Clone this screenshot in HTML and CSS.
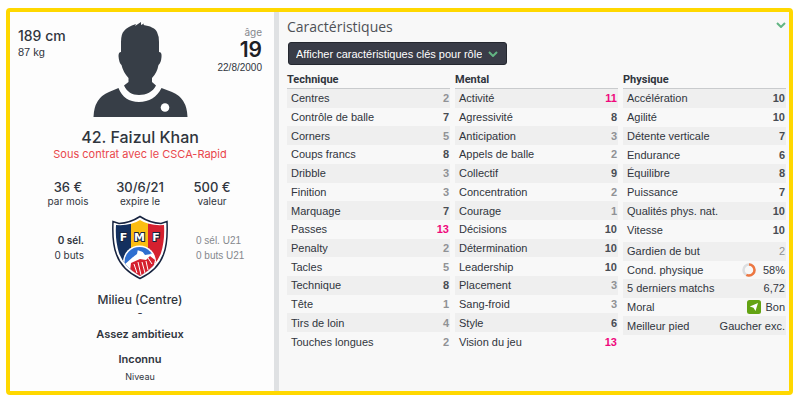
FILE: index.html
```html
<!DOCTYPE html>
<html lang="fr">
<head>
<meta charset="utf-8">
<meta name="viewport" content="width=device-width, initial-scale=1">
<title>Faizul Khan</title>
<link rel="stylesheet" href="styles.css">
</head>
<body>
<main class="frame">
  <aside class="profile">
    <header class="identity">
      <div class="build">
        <div class="height">189 cm</div>
        <div class="weight">87 kg</div>
      </div>
      <svg class="portrait" viewBox="0 0 95 95" aria-hidden="true">
        <path d="M48 0L48 3L51 1.500L50.500 3C57 4 62 6 64 10Q66 14 66 20V30Q69 30 68.500 35Q68 41 65.500 43Q64 51 59 56V60L63 63.500C60 70 53 73 46 73C39 73 34 70 31 63.500L35.500 60V56Q30 50 28.500 43Q26 41 25.500 34Q25.500 30 28 30L28 20Q28 12 31 9Q34 5 43 2L42 4Z"/>
        <path d="M25.500 66C29 75 36 80 46 80C56 80 64 75 68.500 66L79 70Q94 76 94.500 95H0.500Q1 76 16 70Z"/>
        <circle class="pin" cx="72" cy="85.500" r="4.300"/>
      </svg>
      <div class="age">
        <div class="age-label">âge</div>
        <div class="age-value">19</div>
        <div class="birth">22/8/2000</div>
      </div>
    </header>
    <h1 class="name">42. Faizul Khan</h1>
    <p class="club">Sous contrat avec le CSCA-Rapid</p>
    <dl class="contract">
      <div><dd>36 €</dd><dt>par mois</dt></div>
      <div><dd>30/6/21</dd><dt>expire le</dt></div>
      <div><dd>500 €</dd><dt>valeur</dt></div>
    </dl>
    <section class="nation">
      <div class="caps">0 sél.<br><span>0 buts</span></div>
      <svg class="crest" viewBox="0 0 58 65" role="img" aria-label="FMF">
        <defs><clipPath id="field"><path d="M29 5Q20 11 5 10Q4 25 8 38Q13 52 29 61Q45 52 50 38Q54 25 53 10Q38 11 29 5Z"/></clipPath></defs>
        <path d="M29 1.500Q19 8 8 8.500L2 6.500Q1 28 5.500 39.500Q11 55 29 63.500Q47 55 52.500 39.500Q57 28 56 6.500L50 8.500Q39 8 29 1.500Z" fill="#fff" stroke="#17233f" stroke-width="1.500"/>
        <g clip-path="url(#field)">
          <path fill="#14305f" d="M0 0H20V65H0Z"/>
          <path fill="#fbbd12" d="M20 0H37V65H20Z"/>
          <path fill="#d5202f" d="M37 0H58V65H37Z"/>
          <circle cx="28.500" cy="47" r="16.500" fill="#fff"/>
          <circle cx="28.500" cy="47" r="15" fill="#2f6fd0"/>
          <path fill="#fff" d="M13 50L22 42L26 35L32 37L43 39L44 49L34 62L20 60Z"/>
          <path fill="#2f6fd0" d="M22 36L27 34L26 39L22 42ZM31 36L36 35L40 39L34 40Z"/>
          <path fill="#d5202f" d="M20 48L29 44L35 45L39 41L44 45L42 54L29 63L19 56Z"/>
          <path d="M23 49L26 58M27 47L30 60M31 47L34 58M35 46L37 55M37 43L41 49" fill="none" stroke="#fff" stroke-width="1"/>
        </g>
        <g class="crest-text"><text x="12.500" y="26">F</text><text x="28.500" y="26">M</text><text x="45" y="26">F</text></g>
      </svg>
      <div class="caps junior">0 sél. U21<br>0 buts U21</div>
    </section>
    <p class="position">Milieu (Centre)</p>
    <p class="dash">-</p>
    <p class="trait">Assez ambitieux</p>
    <p class="trait standing">Inconnu</p>
    <p class="level">Niveau</p>
  </aside>

  <section class="attributes">
    <header class="heading">
      <h2>Caractéristiques</h2>
      <button class="collapse" type="button" aria-label="Réduire"><svg viewBox="0 0 10 6" aria-hidden="true"><path d="M1 1L5 5L9 1"/></svg></button>
    </header>
    <div class="picker">
      <select aria-label="Rôle"><option>Afficher caractéristiques clés pour rôle</option></select>
      <svg viewBox="0 0 10 6" aria-hidden="true"><path d="M1 1L5 5L9 1"/></svg>
    </div>
    <div class="columns">
      <div class="column">
        <h3>Technique</h3>
        <table class="full">
          <tr><th scope="row">Centres</th><td class="low">2</td></tr>
          <tr><th scope="row">Contrôle de balle</th><td>7</td></tr>
          <tr><th scope="row">Corners</th><td class="low">5</td></tr>
          <tr><th scope="row">Coups francs</th><td>8</td></tr>
          <tr><th scope="row">Dribble</th><td class="low">3</td></tr>
          <tr><th scope="row">Finition</th><td class="low">3</td></tr>
          <tr><th scope="row">Marquage</th><td>7</td></tr>
          <tr><th scope="row">Passes</th><td class="top">13</td></tr>
          <tr><th scope="row">Penalty</th><td class="low">2</td></tr>
          <tr><th scope="row">Tacles</th><td class="low">5</td></tr>
          <tr><th scope="row">Technique</th><td>8</td></tr>
          <tr><th scope="row">Tête</th><td class="low">1</td></tr>
          <tr><th scope="row">Tirs de loin</th><td class="low">4</td></tr>
          <tr><th scope="row">Touches longues</th><td class="low">2</td></tr>
        </table>
      </div>
      <div class="column">
        <h3>Mental</h3>
        <table class="full">
          <tr><th scope="row">Activité</th><td class="top">11</td></tr>
          <tr><th scope="row">Agressivité</th><td>8</td></tr>
          <tr><th scope="row">Anticipation</th><td class="low">3</td></tr>
          <tr><th scope="row">Appels de balle</th><td class="low">2</td></tr>
          <tr><th scope="row">Collectif</th><td>9</td></tr>
          <tr><th scope="row">Concentration</th><td class="low">2</td></tr>
          <tr><th scope="row">Courage</th><td class="low">1</td></tr>
          <tr><th scope="row">Décisions</th><td>10</td></tr>
          <tr><th scope="row">Détermination</th><td>10</td></tr>
          <tr><th scope="row">Leadership</th><td>10</td></tr>
          <tr><th scope="row">Placement</th><td class="low">3</td></tr>
          <tr><th scope="row">Sang-froid</th><td class="low">3</td></tr>
          <tr><th scope="row">Style</th><td>6</td></tr>
          <tr><th scope="row">Vision du jeu</th><td class="top">13</td></tr>
        </table>
      </div>
      <div class="column">
        <h3>Physique</h3>
        <table class="physical">
          <tr><th scope="row">Accélération</th><td>10</td></tr>
          <tr><th scope="row">Agilité</th><td>10</td></tr>
          <tr><th scope="row">Détente verticale</th><td>7</td></tr>
          <tr><th scope="row">Endurance</th><td>6</td></tr>
          <tr><th scope="row">Équilibre</th><td>8</td></tr>
          <tr><th scope="row">Puissance</th><td>7</td></tr>
          <tr><th scope="row">Qualités phys. nat.</th><td>10</td></tr>
          <tr><th scope="row">Vitesse</th><td>10</td></tr>
        </table>
        <table class="status">
          <tr><th scope="row">Gardien de but</th><td class="low">2</td></tr>
          <tr><th scope="row">Cond. physique</th><td><svg class="ring" viewBox="0 0 14 14" aria-hidden="true"><circle cx="7" cy="7" r="5.500" stroke="#dcdee0"/><circle cx="7" cy="7" r="5.500" stroke="#ee7741" pathLength="100" stroke-dasharray="58 42" transform="rotate(-90 7 7)"/></svg>58%</td></tr>
          <tr><th scope="row">5 derniers matchs</th><td>6,72</td></tr>
          <tr><th scope="row">Moral</th><td><svg class="morale" viewBox="0 0 14 14" aria-hidden="true"><rect width="14" height="14" rx="2.500" fill="#63a313"/><path fill="#fff" d="M11 3L8.500 11L6.500 7.700L2.800 6.500Z"/></svg>Bon</td></tr>
          <tr><th scope="row">Meilleur pied</th><td>Gaucher exc.</td></tr>
        </table>
      </div>
    </div>
  </section>
</main>
</body>
</html>
```
FILE: styles.css
```css
* { box-sizing: border-box; }
body {
  margin: 0;
  padding: 8px 7px 5px 6px;
  background: #fff;
  color: #30353d;
  font: 11px/15px "Liberation Sans", Arial, sans-serif;
}
h1, h2, h3, p, dl, dd { margin: 0; }
svg { display: block; }

.frame {
  display: grid;
  grid-template-columns: 269px minmax(0, 1fr);
  min-height: calc(100vh - 13px);
  border: 4px solid #ffd800;
  border-radius: 4px;
  background: #f8f8f8;
}

.profile {
  padding: 10px 12px 4px 8px;
  border-right: 5px solid #dfe1e3;
  background: #fdfdfd;
  font-family: Inter, "Liberation Sans", sans-serif;
  text-align: center;
}
.identity {
  display: grid;
  grid-template-columns: 1fr 95px 1fr;
}
.build { padding-top: 6px; text-align: left; white-space: nowrap; }
.height { font-size: 14px; line-height: 16px; font-weight: 500; }
.weight { font: 11px/16px "Liberation Sans", sans-serif; }
.portrait { width: 95px; height: 95px; fill: #373e47; }
.portrait .pin { fill: #fff; }
.age { padding-top: 2px; text-align: right; }
.age-label { color: #85888d; font-size: 10px; line-height: 16px; }
.age-value { font-size: 21px; line-height: 20px; font-weight: 600; color: #1d2026; }
.birth { font: 10px/15px "Liberation Sans", sans-serif; }

.name { margin-top: 10px; font-size: 16px; line-height: 20px; font-weight: 500; }
.club { color: #e9474c; font-size: 11px; }
.contract {
  display: grid;
  grid-template-columns: repeat(3, 72px);
  justify-content: center;
  margin-top: 17px;
}
.contract div { display: flex; flex-direction: column; }
.contract dd { font-size: 13px; line-height: 16px; font-weight: 500; }
.contract dt { font-size: 10px; line-height: 13px; }
.nation {
  display: grid;
  grid-template-columns: 1fr 58px 1fr;
  column-gap: 27px;
  align-items: center;
  margin-top: 7px;
}
.caps { font-size: 10px; font-weight: 600; text-align: right; white-space: nowrap; }
.caps span { font-weight: 400; }
.caps.junior {
  color: #85888d;
  font: 10px/15px "Liberation Sans", sans-serif;
  text-align: left;
}
.crest { width: 58px; height: 65px; }
.crest-text {
  fill: #fff;
  stroke: #14233f;
  stroke-width: 2px;
  paint-order: stroke;
  font: bold 11px "DejaVu Sans", sans-serif;
  text-anchor: middle;
}
.position { margin-top: 13px; font-size: 12px; line-height: 14px; font-weight: 500; }
.dash { line-height: 13px; }
.trait { margin-top: 6px; font-size: 11px; line-height: 16px; font-weight: 600; }
.standing { margin-top: 9px; }
.level { margin-top: 2px; font-size: 9px; }

.attributes { padding: 6px 3px 0 8px; }
.heading { display: flex; justify-content: space-between; }
.heading h2 { font: 400 14px/18px "Open Sans", sans-serif; color: #4d5056; }
.collapse {
  align-self: flex-start;
  padding: 4px 0;
  border: 0;
  background: none;
}
.collapse svg, .picker svg {
  width: 10px;
  height: 6px;
  fill: none;
  stroke: #62b583;
  stroke-width: 2;
}
.picker {
  position: relative;
  width: max-content;
  margin: 6px 0 0 1px;
}
.picker select {
  display: block;
  width: 219px;
  height: 23px;
  padding: 0 24px 0 7px;
  border: 1px solid #24272f;
  border-radius: 3px;
  appearance: none;
  background: #393c47;
  color: #fff;
  font: 11px "Liberation Sans", sans-serif;
}
.picker svg { position: absolute; top: 9px; right: 9px; pointer-events: none; }

.columns {
  display: grid;
  grid-template-columns: repeat(3, minmax(0, 1fr));
  gap: 5px;
  margin-top: 7px;
}
.column h3 {
  border-bottom: 1px solid #c9cbcd;
  font: 700 11px/16px Roboto, sans-serif;
}
table { width: 100%; border-collapse: collapse; }
.full { height: 262px; }
.physical { height: 150px; }
.status { height: 93px; margin-top: 3px; }
tr:nth-child(odd) { background: #efefef; }
th, td { padding: 0; line-height: 14px; white-space: nowrap; }
th { padding-left: 4px; font-weight: 400; text-align: left; }
td { padding-right: 1px; color: #484c53; text-align: right; font-weight: 700; }
td.low { color: #909295; }
td.top { color: #f0087c; }
.status td { font-weight: 400; }
.status td:not(.low) { color: #30353d; }
td svg { display: inline-block; width: 14px; height: 14px; vertical-align: top; }
.ring { margin-right: 7px; fill: none; stroke-width: 2.5; }
.morale { margin-right: 4px; }
```
